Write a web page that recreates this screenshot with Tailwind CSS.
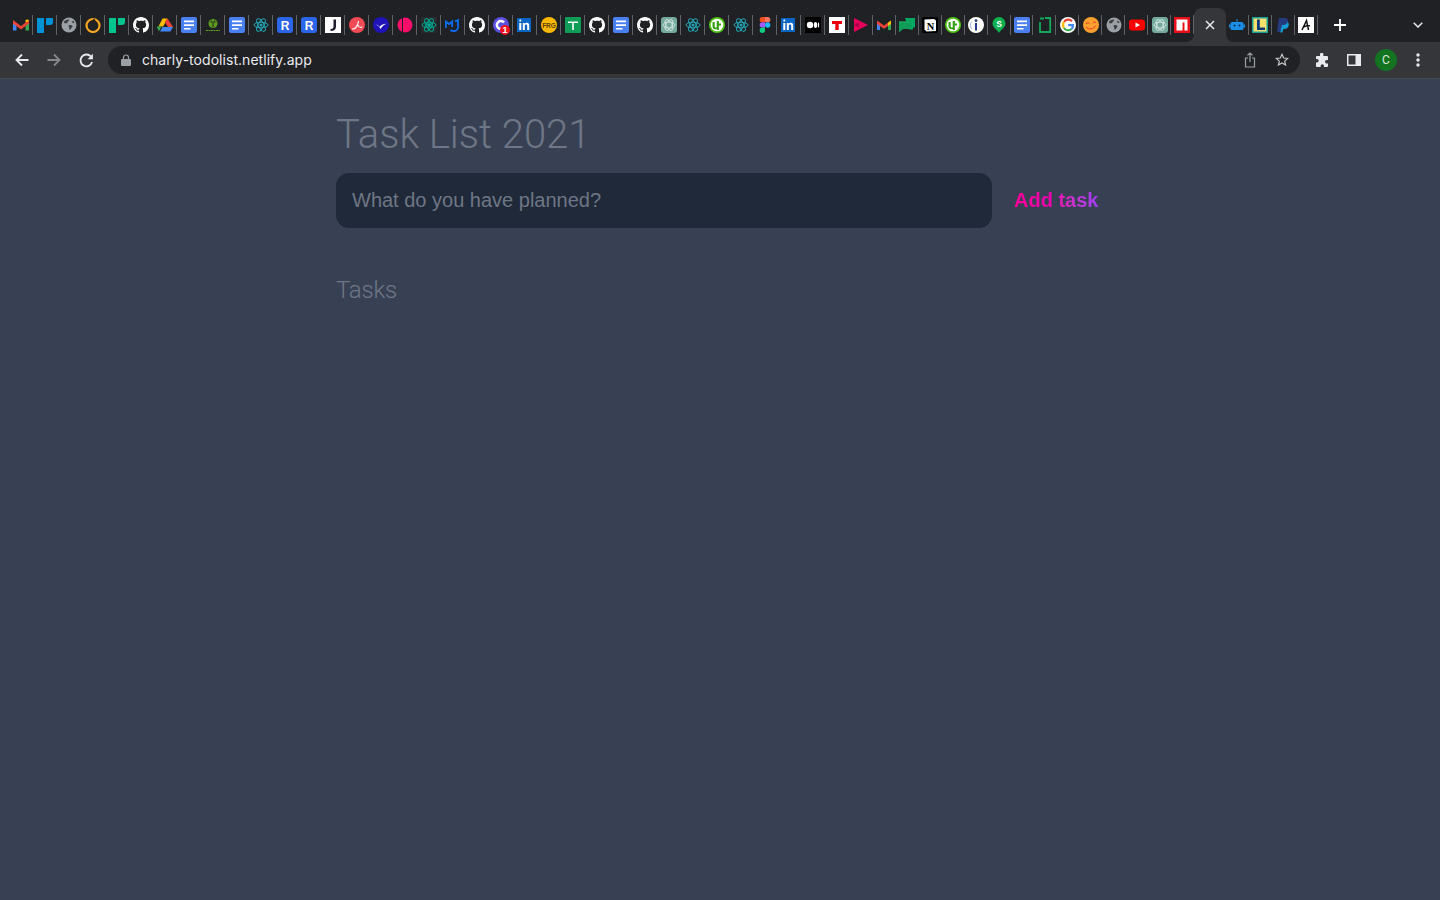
<!DOCTYPE html>
<html lang="en">
<head>
    <meta charset="UTF-8">
    <meta name="viewport" content="width=device-width, initial-scale=1.0">
    <title>Task List 2021</title>
    <script src="https://cdn.jsdelivr.net/npm/@tailwindcss/browser@4"></script>
</head>
<body class="bg-[#384154] h-[900px] overflow-hidden font-['Liberation_Sans',sans-serif]">

<!-- shared favicons -->
<svg class="hidden">
    <symbol id="gh" viewBox="0 0 16 16"><path fill="#fff" d="M8 0C3.58 0 0 3.58 0 8c0 3.54 2.29 6.53 5.47 7.59.4.07.55-.17.55-.38 0-.19-.01-.82-.01-1.49-2.01.37-2.53-.49-2.69-.94-.09-.23-.48-.94-.82-1.13-.28-.15-.68-.52-.01-.53.63-.01 1.08.58 1.23.82.72 1.21 1.87.87 2.33.66.07-.52.28-.87.51-1.07-1.78-.2-3.64-.89-3.64-3.95 0-.87.31-1.59.82-2.15-.08-.2-.36-1.02.08-2.12 0 0 .67-.21 2.2.82.64-.18 1.32-.27 2-.27.68 0 1.36.09 2 .27 1.53-1.04 2.2-.82 2.2-.82.44 1.1.16 1.92.08 2.12.51.56.82 1.27.82 2.15 0 3.07-1.87 3.75-3.65 3.95.29.25.54.73.54 1.48 0 1.07-.01 1.93-.01 2.2 0 .21.15.46.55.38A8.013 8.013 0 0016 8c0-4.42-3.58-8-8-8z"/></symbol>
    <symbol id="docs" viewBox="0 0 16 16"><rect width="16" height="16" rx="2" fill="#4a7ff0"/><path fill="#fff" d="M3 3.500h10v1.700H3zM3 7.200h10v1.700H3zM3 10.900h6.500v1.700H3z"/></symbol>
    <symbol id="react" viewBox="0 0 16 16"><g fill="none" stroke="#23a5b5" stroke-width="1"><ellipse cx="8" cy="8" rx="7" ry="2.800"/><ellipse cx="8" cy="8" rx="7" ry="2.800" transform="rotate(60 8 8)"/><ellipse cx="8" cy="8" rx="7" ry="2.800" transform="rotate(120 8 8)"/></g><circle cx="8" cy="8" r="1.500" fill="#23a5b5"/></symbol>
    <symbol id="in" viewBox="0 0 16 16"><rect y="1" width="14" height="14" fill="#0a66c2"/><path fill="#fff" d="M2.300 6h2v7h-2zM2.200 3.500a1.100 1.100 0 1 0 2.200 0 1.100 1.100 0 1 0-2.200 0zM5.800 6h1.900v1c.4-.7 1.100-1.200 2.100-1.200 1.800 0 2.400 1.100 2.400 3V13h-2V9.200c0-.9-.3-1.600-1.200-1.600s-1.200.7-1.200 1.600V13h-2z"/></symbol>
    <symbol id="globe" viewBox="0 0 16 16"><circle cx="8" cy="8" r="7.500" fill="#9aa0a6"/><path fill="#3c4043" d="M3 4.500c1.500-1.500 3.500-2.300 5-2 .5.800-.3 1.500-1 2-.6.500-.3 1.300-1.200 1.700C4.800 6.600 4 6 3 6zM8 8c1.300-.3 3 .1 3.500 1 .3.800-.7 1.500-1.200 2.200-.4.700-1 1.800-1.700 1.600-.5-.8-.2-1.800-.6-2.500C7.600 9.700 7.500 8.600 8 8zM12 3.500l1.500 2-1.500.8-1-1.500z"/></symbol>
    <symbol id="gpt" viewBox="0 0 16 16"><rect width="16" height="16" rx="3" fill="#74aa9c"/><g fill="none" stroke="#fff" stroke-width=".7" opacity=".85"><ellipse cx="8" cy="8" rx="6" ry="3"/><ellipse cx="8" cy="8" rx="6" ry="3" transform="rotate(60 8 8)"/><ellipse cx="8" cy="8" rx="6" ry="3" transform="rotate(120 8 8)"/></g></symbol>
    <symbol id="rblue" viewBox="0 0 16 16"><rect width="16" height="16" rx="3" fill="#2b66e8"/><text x="8" y="12.500" text-anchor="middle" font-size="12" font-weight="700" fill="#fff" font-family="Liberation Sans">R</text></symbol>
    <symbol id="utor" viewBox="0 0 16 16"><circle cx="8" cy="8" r="8" fill="#4fc414"/><circle cx="8" cy="8" r="6.300" fill="#fff"/><path fill="#35a012" d="M3.500 5h2.200v4.200c0 1.400 1.200 1.600 2 1V4h2.200v2.500H12v2h-2.100V13H7.800v-1c-2 .8-4.300 0-4.300-2.500z"/></symbol>
</svg>

<!-- tab strip -->
<div class="h-[42px] bg-[#202124] flex items-start pt-[15px] pl-[9px] relative">
    <div class="flex shrink-0 *:w-6 *:h-5 *:shrink-0 *:border-r *:border-[#5f6368] *:flex *:items-center *:justify-center [&_svg]:w-4 [&_svg]:h-4">
        <span><svg viewBox="0 0 16 16"><path fill="#4285f4" d="M0 4v9.500h3.500V6.500z"/><path fill="#34a853" d="M16 4v9.500h-3.500V6.500z"/><path fill="#ea4335" d="M0 3l8 6 8-6v3.500l-8 6-8-6z"/><path fill="#fbbc04" d="M12.500 5.500V3c1.500-1.200 3.500-.5 3.500 1z"/></svg></span>
        <span><svg viewBox="0 0 16 16"><path fill="#0092d6" d="M0 1h7v15H0z"/><path fill="#0092d6" d="M9 1h7v4a3 3 0 0 1-3 3H9z"/></svg></span>
        <span><svg><use href="#globe"/></svg></span>
        <span><svg viewBox="0 0 16 16"><circle cx="8" cy="8.500" r="6.500" fill="none" stroke="#f5a623" stroke-width="2.200"/><path d="M8.500 2l1.500 2.500-1.500 2" fill="none" stroke="#202124" stroke-width="1.500"/></svg></span>
        <span><svg viewBox="0 0 16 16"><path fill="#00c58e" d="M0 1h7v15H0z"/><path fill="#00c58e" d="M9 1h7v4a3 3 0 0 1-3 3H9z"/></svg></span>
        <span><svg><use href="#gh"/></svg></span>
        <span><svg viewBox="0 0 16 16"><path fill="#fbbc04" d="M5.500 1.500h5L6.200 9.500H1.500z"/><path fill="#34a853" d="M1.500 9.500h4.700L3.700 14.500z" transform="translate(-1.800 0)"/><path fill="#4285f4" d="M3 14.500l2.500-4.500H16l-2.500 4.500z"/><path fill="#ea4335" d="M10.500 1.500L16 10h-5L7.800 5z"/></svg></span>
        <span><svg><use href="#docs"/></svg></span>
        <span><svg viewBox="0 0 16 16"><circle cx="8" cy="6.500" r="4.500" fill="#5d9e1f"/><path d="M4.500 5h7M6 2.500l3 8M10 2.500l-3 8" stroke="#202124" stroke-width=".6"/><path d="M1 13.500h14" stroke="#5d9e1f" stroke-width="1" stroke-dasharray="2 .5"/></svg></span>
        <span><svg><use href="#docs"/></svg></span>
        <span><svg><use href="#react"/></svg></span>
        <span><svg><use href="#rblue"/></svg></span>
        <span><svg><use href="#rblue"/></svg></span>
        <span><svg viewBox="0 0 16 16"><rect width="16" height="16" fill="#fff"/><path fill="#1c1c2c" d="M8.500 2.500h2.500v7c0 3-2 4.500-5.500 4.500v-2c2 0 3-.8 3-2.500z"/></svg></span>
        <span><svg viewBox="0 0 16 16"><circle cx="8" cy="8" r="8" fill="#f04a55"/><path d="M3 12c3 .5 6-3 6.500-8M7 9c2-.5 3.500-.5 3 1.500M11 10.500c.800 0 2-.5 2-1" fill="none" stroke="#fff" stroke-width="1.100"/></svg></span>
        <span><svg viewBox="0 0 16 16"><circle cx="8" cy="8" r="8" fill="#2014b8"/><path fill="#fff" d="M2.500 7.500c2 .2 3.200 1 4 2.500 1.200-2 3.500-3.200 7-3.300-2.500 1-4.500 2.600-6 5.300C6.500 9.800 5 8.500 2.500 7.500z"/></svg></span>
        <span><svg viewBox="0 0 16 16"><circle cx="8" cy="8" r="7.500" fill="#ff0f6b"/><path d="M5.500 0v16" stroke="#202124" stroke-width="1"/></svg></span>
        <span><svg viewBox="0 0 16 16"><rect width="16" height="16" fill="#282a2e"/><g fill="none" stroke="#00a78e" stroke-width="1"><ellipse cx="8" cy="8" rx="7" ry="2.800"/><ellipse cx="8" cy="8" rx="7" ry="2.800" transform="rotate(60 8 8)"/><ellipse cx="8" cy="8" rx="7" ry="2.800" transform="rotate(120 8 8)"/></g><circle cx="8" cy="8" r="2" fill="#00a78e"/></svg></span>
        <span><svg viewBox="0 0 16 16"><path fill="none" stroke="#0a6cf0" stroke-width="1.900" d="M.800 11V4.500l3.200 2.500 3.200-2.500V10M13 2v8.500c0 2-2 3.500-4.500 3.500-1.500 0-2.500-.5-3-1"/><path fill="#0a6cf0" d="M10 3h2v2h-2z"/></svg></span>
        <span><svg><use href="#gh"/></svg></span>
        <span class="relative"><svg viewBox="0 0 16 16"><circle cx="8" cy="8" r="8" fill="#5b4fe0"/><path d="M11 5.500A4 4 0 1 0 11 10.500" fill="none" stroke="#fff" stroke-width="2.500"/></svg><b class="absolute right-[2px] bottom-0 w-[10px] h-[10px] rounded-full bg-[#f01020] text-white text-[9px] leading-[10px] text-center font-bold">1</b></span>
        <span><svg><use href="#in"/></svg></span>
        <span><svg viewBox="0 0 16 16"><circle cx="8" cy="8" r="8" fill="#ffb900"/><text x="8" y="10.500" text-anchor="middle" font-size="6.500" font-weight="700" fill="#5a4300" font-family="Liberation Sans">FRG</text></svg></span>
        <span><svg viewBox="0 0 16 16"><rect width="16" height="16" rx="1" fill="#0f9d58"/><path fill="#fff" d="M3 4.500h10V6H8.800v7H7.200V6H3z"/></svg></span>
        <span><svg><use href="#gh"/></svg></span>
        <span><svg><use href="#docs"/></svg></span>
        <span><svg><use href="#gh"/></svg></span>
        <span><svg><use href="#gpt"/></svg></span>
        <span><svg><use href="#react"/></svg></span>
        <span><svg><use href="#utor"/></svg></span>
        <span><svg><use href="#react"/></svg></span>
        <span><svg viewBox="0 0 16 16"><path fill="#f24e1e" d="M5.300 0H8v5.300H5.300a2.650 2.650 0 0 1 0-5.300z"/><path fill="#ff7262" d="M8 0h2.700a2.650 2.650 0 0 1 0 5.300H8z"/><path fill="#a259ff" d="M5.300 5.300H8v5.300H5.300a2.650 2.650 0 0 1 0-5.300z"/><circle cx="10.700" cy="8" r="2.650" fill="#1abcfe"/><path fill="#0acf83" d="M5.300 10.600H8v2.700a2.650 2.650 0 1 1-2.700-2.700z"/></svg></span>
        <span><svg><use href="#in"/></svg></span>
        <span><svg viewBox="0 0 16 16"><rect width="16" height="16" fill="#000"/><circle cx="5" cy="8" r="3.200" fill="#fff"/><ellipse cx="10.500" cy="8" rx="1.700" ry="3" fill="#fff"/><ellipse cx="13.500" cy="8" rx=".7" ry="2.700" fill="#fff"/></svg></span>
        <span><svg viewBox="0 0 16 16"><rect width="16" height="16" fill="#fff"/><path fill="#e8000d" d="M3 4h10v3H9.700v6H6.300V7H3z"/></svg></span>
        <span><svg viewBox="0 0 16 16"><path fill="#e6005c" d="M1 1l14 7-14 7z"/><path fill="#a80048" d="M1 8l5-2.500 0 5z"/></svg></span>
    </div>
    <div class="flex shrink-0 *:w-[22.93px] *:h-5 *:pl-px *:shrink-0 *:border-r *:border-[#5f6368] *:flex *:items-center *:justify-center [&_svg]:w-4 [&_svg]:h-4">
        <span><svg viewBox="0 0 16 16"><path fill="#4285f4" d="M1 4v9h3V7z"/><path fill="#34a853" d="M15 7v6h-3V7z"/><path fill="#ea4335" d="M1 3.500l7 5 4-3v3.500l-4 2.800L1 7z"/><path fill="#fbbc04" d="M12 5.500l3-2V7l-3 2z"/></svg></span>
        <span><svg viewBox="0 0 16 16"><path fill="#00a862" d="M6 1h10v9.500H14v2H10z"/><path fill="#0f9d58" d="M0 4.500h11.500V12H4l-4 3.500z"/><path fill="#1cb06a" d="M0 4.500h11v1H0z"/></svg></span>
        <span><svg viewBox="0 0 16 16"><rect width="16" height="16" rx="2" fill="#000"/><path fill="#fff" d="M2.500 2.500l9.500-.6 2 1.500V14l-9.500.5-2-2z"/><text x="8.500" y="12.500" text-anchor="middle" font-size="10.500" font-weight="700" fill="#000" font-family="Liberation Serif">N</text></svg></span>
        <span><svg><use href="#utor"/></svg></span>
        <span><svg viewBox="0 0 16 16"><circle cx="8" cy="8" r="8" fill="#fff"/><circle cx="8" cy="3.700" r="1.400" fill="#213a8f"/><path fill="#213a8f" d="M7 6h2v7.500H7z"/><path d="M4 12A5 5 0 0 1 4 4.500" fill="none" stroke="#8aa0d0" stroke-width=".8"/></svg></span>
        <span><svg viewBox="0 0 16 16"><path fill="#0bb24f" d="M8 0a6.500 6.500 0 0 1 6.500 6.500C14.500 10.500 10 12.500 8 16 6 12.500 1.500 10.500 1.500 6.500A6.500 6.500 0 0 1 8 0z"/><text x="8" y="9.500" text-anchor="middle" font-size="8.500" font-weight="700" fill="#fff" font-family="Liberation Sans">S</text></svg></span>
        <span><svg><use href="#docs"/></svg></span>
        <span><svg viewBox="0 0 16 16"><path fill="none" stroke="#14a85a" stroke-width="1.800" d="M8 1h5.200v14H3V5"/><path fill="#14a85a" d="M3 .5h4v2H3z"/></svg></span>
        <span><svg viewBox="0 0 16 16"><circle cx="8" cy="8" r="8" fill="#fff"/><path fill="none" stroke="#ea4335" stroke-width="2.200" d="M12 4.300A5 5 0 0 0 4 5"/><path fill="none" stroke="#fbbc04" stroke-width="2.200" d="M4 5a5 5 0 0 0 0 6"/><path fill="none" stroke="#34a853" stroke-width="2.200" d="M4 11a5 5 0 0 0 7.500 1"/><path fill="none" stroke="#4285f4" stroke-width="2.200" d="M11.500 12c1-.9 1.500-2 1.500-3.800H8.200"/></svg></span>
        <span><svg viewBox="0 0 16 16"><circle cx="8" cy="8" r="8" fill="#f9a12e"/><path fill="none" stroke="#e8352b" stroke-width="1" d="M3 7c1-1.500 2.500-1.500 3.500 0M9.500 6c1-1.200 2.300-1.200 3.500-.3M3 10c3 3 7 2.500 10-1.500"/></svg></span>
        <span><svg><use href="#globe"/></svg></span>
        <span><svg viewBox="0 0 16 16"><rect y="2.500" width="16" height="11" rx="3" fill="#f00"/><path fill="#fff" d="M6.500 5.500L11 8l-4.500 2.500z"/></svg></span>
        <span><svg><use href="#gpt"/></svg></span>
        <span><svg viewBox="0 0 16 16"><rect width="16" height="16" fill="#e8101a"/><path fill="#fff" d="M2.500 2.500h11v11h-3V5.500H8.500v8h-6z"/></svg></span>
    </div>
    <!-- active tab -->
    <div class="w-8 h-[34px] -mt-[7px] shrink-0 bg-[#35363a] rounded-t-lg relative flex items-center justify-center">
        <span class="absolute -left-2 bottom-0 w-2 h-2 bg-[#35363a]"><span class="block w-2 h-2 bg-[#202124] rounded-br-lg"></span></span>
        <svg class="w-[10px] h-[10px]" viewBox="0 0 10 10"><path d="M1 1l8 8M9 1l-8 8" stroke="#e8eaed" stroke-width="1.500"/></svg>
        <span class="absolute -right-2 bottom-0 w-2 h-2 bg-[#35363a]"><span class="block w-2 h-2 bg-[#202124] rounded-bl-lg"></span></span>
    </div>
    <div class="flex shrink-0 *:w-[22.93px] *:h-5 *:shrink-0 *:border-r *:border-[#5f6368] *:flex *:items-center *:justify-center [&_svg]:w-4 [&_svg]:h-4">
        <span><svg viewBox="0 0 16 16"><path fill="#1a8fe8" d="M3 5h10a1.500 1.500 0 0 1 1.500 1.500v5A1.500 1.500 0 0 1 13 13H3a1.500 1.500 0 0 1-1.500-1.500v-5A1.500 1.500 0 0 1 3 5z"/><path fill="#1a8fe8" d="M7.500 2h1v3h-1zM0 7.500h1.500v3H0zM14.500 7.500H16v3h-1.500z"/><circle cx="5.500" cy="8.500" r="1" fill="#0b2a55"/><circle cx="10.500" cy="8.500" r="1" fill="#0b2a55"/></svg></span>
        <span><svg viewBox="0 0 16 16"><rect width="16" height="16" fill="#17a097"/><rect x="1.500" y="1.500" width="13" height="13" fill="#f7e06e"/><path fill="#103a7a" d="M5 2.500h2.800v8H13V13H5z"/></svg></span>
        <span><svg viewBox="0 0 16 16"><path fill="#253b80" d="M4 1h5.500c3 0 4 2 3.500 4-.5 2.500-2.500 3.500-4.500 3.500H6.500L5.500 15H2z"/><path fill="#179bd7" d="M12.500 5c1.500 1 1.500 2.500 1 4-.5 2-2 3-4 3H8.200l-.7 3.500H5.300l.5-3 1-4.500h2c1.700 0 3-.8 3.700-3z"/></svg></span>
        <span><svg viewBox="0 0 16 16"><rect width="16" height="16" fill="#fff"/><path fill="none" stroke="#111" stroke-width="1.500" d="M4 13L8.500 3.500l2 9.500M6 10c1.500-1 3.500-1.500 6-1.200"/></svg></span>
    </div>
    <svg class="w-3 h-3 absolute left-[1334px] top-[19px]" viewBox="0 0 12 12"><path d="M6 0v12M0 6h12" stroke="#fff" stroke-width="1.800"/></svg>
    <svg class="w-[10px] h-[6px] absolute left-[1413px] top-[22px]" viewBox="0 0 10 6"><path d="M.7.7L5 5l4.300-4.300" fill="none" stroke="#e8eaed" stroke-width="1.500"/></svg>
</div>

<!-- toolbar -->
<div class="h-[37px] bg-[#35363a] border-b border-[#4a4b50] flex items-start pt-[4px]">
    <div class="w-[108px] h-7 shrink-0 flex items-center relative">
        <svg class="w-[14px] h-[14px] ml-[15px]" viewBox="0 0 14 14"><path d="M13.500 7H1.500M7 1.500L1.500 7 7 12.500" fill="none" stroke="#e8eaed" stroke-width="1.800"/></svg>
        <svg class="w-[14px] h-[14px] ml-[18px]" viewBox="0 0 14 14"><path d="M.5 7h12M7 1.500L12.500 7 7 12.500" fill="none" stroke="#85878b" stroke-width="1.800"/></svg>
        <svg class="w-[15px] h-[15px] ml-[18px]" viewBox="0 0 14 14"><path d="M12.200 8.500A5.500 5.500 0 1 1 11 3.200" fill="none" stroke="#e8eaed" stroke-width="1.700"/><path d="M13 .8v5H8z" fill="#e8eaed"/></svg>
    </div>
    <div class="w-[1192px] h-7 shrink-0 bg-[#202124] rounded-full flex items-center pl-[13px] pr-[11px]">
        <svg class="w-[10px] h-3 shrink-0" viewBox="0 0 10 12"><path d="M2.500 5V3.500a2.500 2.500 0 0 1 5 0V5" fill="none" stroke="#9aa0a6" stroke-width="1.200"/><rect y="5" width="10" height="7" rx="1" fill="#9aa0a6"/></svg>
        <span class="ml-[11px] -mt-px text-[14px] tracking-[.04px] text-[#e8eaed] font-['Inter',sans-serif]">charly-todolist.netlify.app</span>
        <svg class="w-3 h-4 ml-auto mr-[-1px]" viewBox="0 0 12 16"><path d="M4 6H1.500v9h9V6H8M6 10V1M3.500 3.300L6 1l2.500 2.300" fill="none" stroke="#9aa0a6" stroke-width="1.200"/></svg>
        <svg class="w-[14px] h-[14px] ml-5" viewBox="0 0 14 14"><path d="M7 1.300l1.700 3.700 4 .4-3 2.700.9 4L7 10l-3.600 2.100.9-4-3-2.700 4-.4z" fill="none" stroke="#c4c7c5" stroke-width="1.200"/></svg>
    </div>
    <div class="flex-1 h-7 flex items-center">
        <svg class="w-[14px] h-[14px] ml-[15px]" viewBox="0 0 14 14"><path fill="#e8eaed" d="M5 1.500a1.700 1.700 0 0 1 3.400 0V3H12a1 1 0 0 1 1 1v3h-1.300a1.700 1.700 0 0 0 0 3.400H13V13a1 1 0 0 1-1 1H9v-1a1.700 1.700 0 0 0-3.400 0v1H2a1 1 0 0 1-1-1V9.500h1a1.700 1.700 0 0 0 0-3.400H1V4a1 1 0 0 1 1-1h3z"/></svg>
        <svg class="w-[14px] h-3 ml-[18px]" viewBox="0 0 14 12"><path fill-rule="evenodd" fill="#e8eaed" d="M0 0h14v12H0zM1.500 1.500v9H8.500v-9z"/></svg>
        <span class="ml-[14px] w-[22px] h-[22px] rounded-full bg-[#137320] text-[#d8e8d8] text-[12px] leading-[22px] text-center font-['Roboto',sans-serif]">C</span>
        <svg class="w-[4px] h-[14px] ml-[19px]" viewBox="0 0 4 14"><circle cx="2" cy="2" r="1.700" fill="#e8eaed"/><circle cx="2" cy="7" r="1.700" fill="#e8eaed"/><circle cx="2" cy="12" r="1.700" fill="#e8eaed"/></svg>
    </div>
</div>

<!-- page -->
<main class="max-w-3xl mx-auto">
    <h1 class="mt-[31px] text-[40px] leading-[50px] font-light text-[#6f7686] font-['Roboto',sans-serif]">Task List 2021</h1>
    <div class="mt-[13px] flex items-center">
        <input type="text" placeholder="What do you have planned?" class="w-[656px] h-[55px] rounded-[13px] bg-[#1f2939] px-4 text-[20px] text-white placeholder:text-[#6f7686] outline-none">
        <button class="ml-[22px] -mt-[2px] text-[20px] font-bold bg-gradient-to-r from-[#ff0099] via-[#e800b0] to-[#a03cf5] bg-clip-text text-transparent">Add task</button>
    </div>
    <h2 class="mt-[46px] text-[24px] leading-8 font-light tracking-[-.2px] text-[#6f7686] font-['Roboto',sans-serif]">Tasks</h2>
</main>

</body>
</html>
